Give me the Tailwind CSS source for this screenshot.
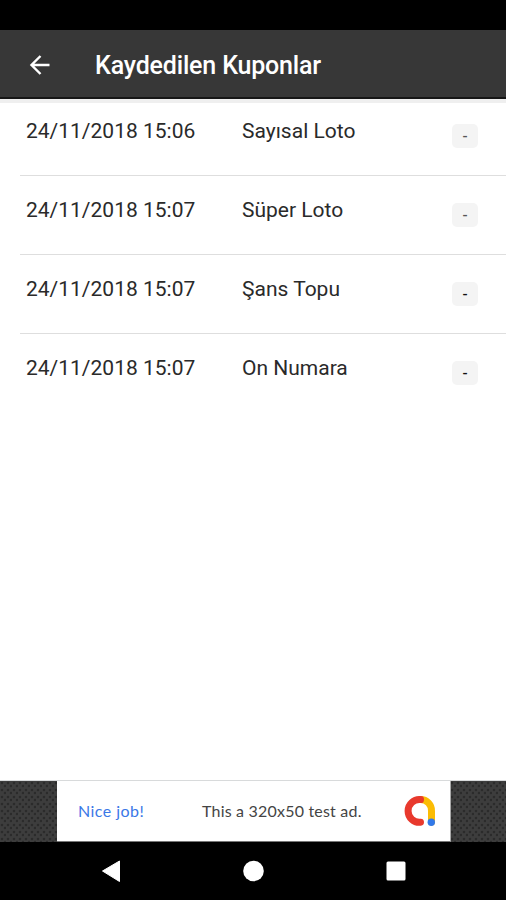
<!DOCTYPE html>
<html lang="tr">
<head>
<meta charset="utf-8">
<title>Kaydedilen Kuponlar</title>
<script src="https://cdn.jsdelivr.net/npm/@tailwindcss/browser@4"></script>
</head>
<body class="bg-white">
<div class="flex h-[900px] w-[506px] flex-col overflow-hidden bg-white font-['Roboto',sans-serif]">
  <div class="h-[30px] shrink-0 bg-black"></div>
  <header class="flex h-[69px] shrink-0 items-center border-b-2 border-[#161616] bg-[#373737] pl-[30px] text-white">
    <svg class="mt-[2px] h-5 w-5 overflow-visible" viewBox="0 0 20 20" fill="none" stroke="currentColor" stroke-width="2.4"><path d="M19.5 10H1.5M10.5 1L1.5 10l9 9"/></svg>
    <h1 class="ml-[45px] mt-[4px] text-[25px] leading-[30px] font-medium tracking-[-0.17px] whitespace-nowrap">Kaydedilen Kuponlar</h1>
  </header>
  <main class="flex-1 border-t-4 border-[#efefef] text-[21px] leading-6 text-[#2a2a2a]">
    <div class="ml-5 flex h-[73px] border-b border-[#dedede] pl-[6px] pt-[16px]">
      <span class="w-[216px]">24/11/2018 15:06</span><span class="w-[210px]">Sayısal Loto</span>
      <span class="mt-[5px] flex h-6 w-[26px] items-center justify-center rounded-[5px] bg-[#f4f4f4] text-[15px] font-medium text-[#555]">-</span>
    </div>
    <div class="ml-5 flex h-[79px] border-b border-[#dedede] pl-[6px] pt-[22px]">
      <span class="w-[216px]">24/11/2018 15:07</span><span class="w-[210px]">Süper Loto</span>
      <span class="mt-[5px] flex h-6 w-[26px] items-center justify-center rounded-[5px] bg-[#f4f4f4] text-[15px] font-medium text-[#555]">-</span>
    </div>
    <div class="ml-5 flex h-[79px] border-b border-[#dedede] pl-[6px] pt-[22px]">
      <span class="w-[216px]">24/11/2018 15:07</span><span class="w-[210px]">Şans Topu</span>
      <span class="mt-[5px] flex h-6 w-[26px] items-center justify-center rounded-[5px] bg-[#f4f4f4] text-[15px] font-medium text-[#111]">-</span>
    </div>
    <div class="ml-5 flex h-[79px] pl-[6px] pt-[22px]">
      <span class="w-[216px]">24/11/2018 15:07</span><span class="w-[210px]">On Numara</span>
      <span class="mt-[5px] flex h-6 w-[26px] items-center justify-center rounded-[5px] bg-[#f4f4f4] text-[15px] font-medium text-[#111]">-</span>
    </div>
  </main>
  <section class="flex h-[62px] shrink-0 border-t border-[#d8dadb] bg-[#3d3d3d] bg-[radial-gradient(circle_at_2px_2px,#2b2b2b_1px,transparent_1.7px),radial-gradient(circle_at_5px_5px,#2b2b2b_1px,transparent_1.7px)] bg-[length:6px_7px] pl-[57px]">
    <div class="flex w-[394px] items-center border-r border-b border-r-[#aaa] border-b-[#777] bg-white pl-[21px] font-['Lato',sans-serif] text-[16px] whitespace-nowrap">
      <span class="w-[124px] tracking-[0.45px] text-[#3b78e7]">Nice job!</span>
      <span class="w-[203px] tracking-[0.2px] text-[#444]">This a 320x50 test ad.</span>
      <svg class="h-[30px] w-[30px] overflow-visible" viewBox="0 0 30 30" fill="none" stroke-width="7" stroke-linecap="round"><path stroke="#fbbc04" d="M15.5 3.5A11 11 0 0 1 26.5 15V26"/><path stroke="#e8392d" d="M15.5 3.6A11.35 11.35 0 1 0 15.5 26.2"/><circle cx="26.3" cy="26.2" r="3.7" fill="#3279ea"/></svg>
    </div>
  </section>
  <nav class="flex h-[58px] shrink-0 justify-center bg-black">
    <svg class="h-[58px] w-[506px]" viewBox="0 0 506 58" fill="#fff"><path stroke="#fff" stroke-width="1" stroke-linejoin="round" d="M102.5 29L119.5 19V39.5Z"/><circle cx="253.5" cy="29" r="10.3"/><rect x="386.5" y="19.5" width="19" height="19" rx="1.5"/></svg>
  </nav>
</div>
</body>
</html>
